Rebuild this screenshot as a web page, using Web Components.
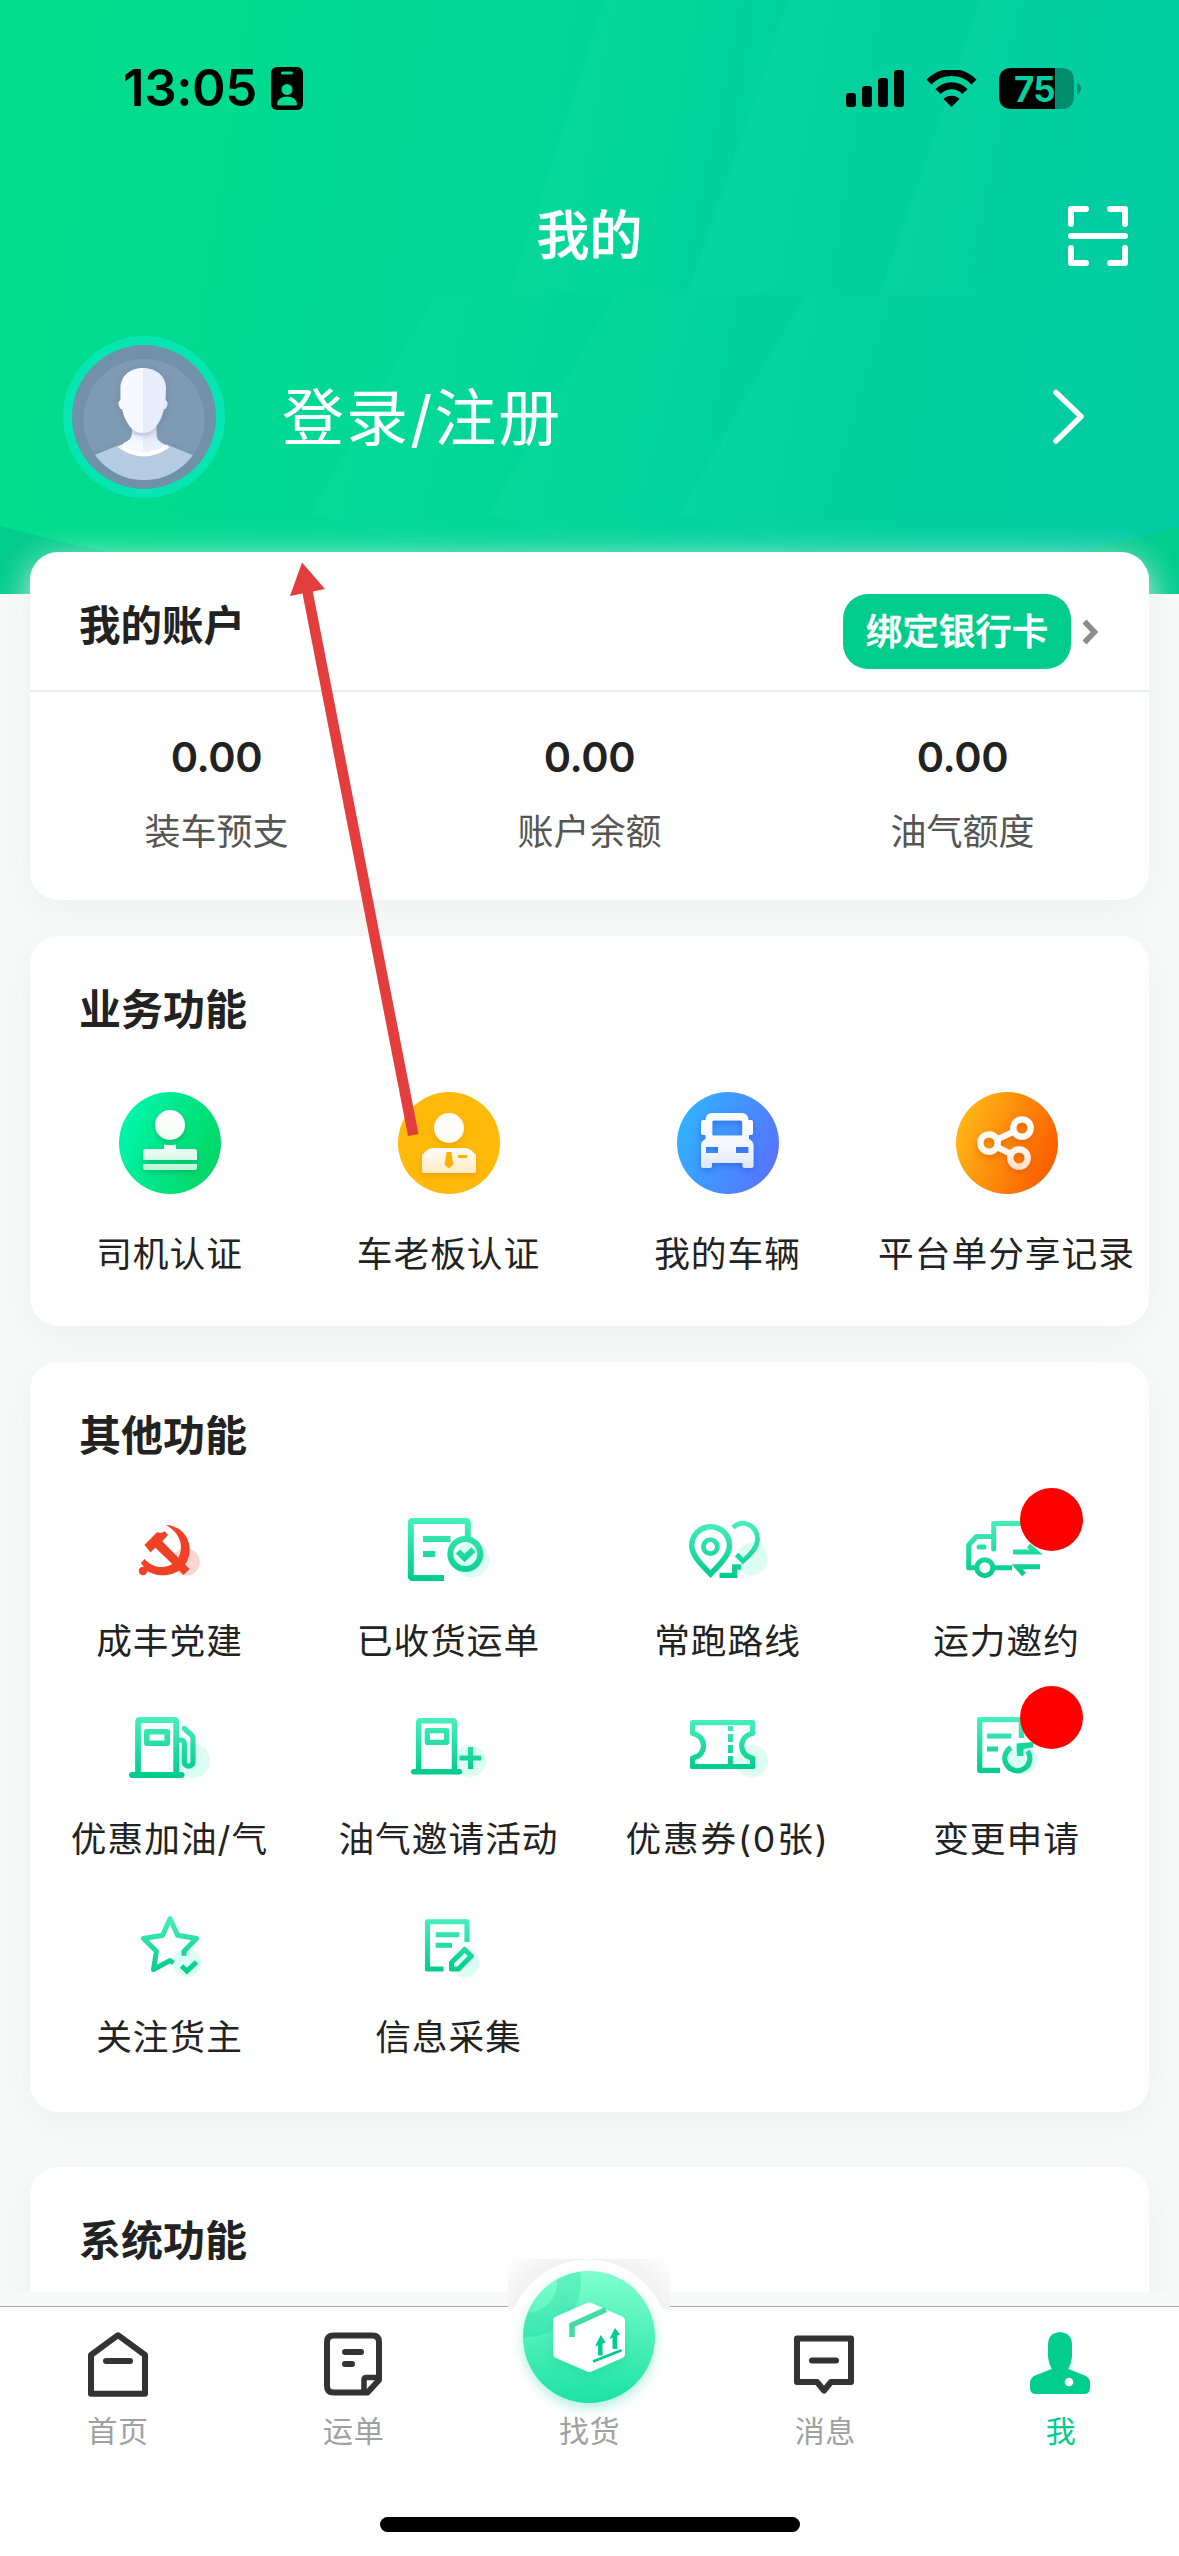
<!DOCTYPE html>
<html lang="zh-CN">
<head>
<meta charset="utf-8">
<title>我的</title>
<style>
html,body{margin:0;padding:0}
body{width:1179px;height:2556px;overflow:hidden;background:#f8faf9;font-family:Inter,"Noto Sans CJK SC",sans-serif;color:#222}
</style>
</head>
<body>
<app-screen>
  <profile-header slot="header" heading="我的" login="登录/注册" time="13:05" battery="75"></profile-header>
  <account-card heading="我的账户" action="绑定银行卡">
    <account-stat value="0.00" label="装车预支"></account-stat>
    <account-stat value="0.00" label="账户余额"></account-stat>
    <account-stat value="0.00" label="油气额度"></account-stat>
  </account-card>
  <menu-card class="biz" heading="业务功能">
    <menu-item icon="stamp">司机认证</menu-item>
    <menu-item icon="owner">车老板认证</menu-item>
    <menu-item icon="car">我的车辆</menu-item>
    <menu-item icon="share">平台单分享记录</menu-item>
  </menu-card>
  <menu-card class="other" heading="其他功能">
    <menu-item icon="party">成丰党建</menu-item>
    <menu-item icon="received">已收货运单</menu-item>
    <menu-item icon="route">常跑路线</menu-item>
    <menu-item icon="truck" dot>运力邀约</menu-item>
    <menu-item icon="gas">优惠加油/气</menu-item>
    <menu-item icon="gasplus">油气邀请活动</menu-item>
    <menu-item icon="coupon" wide>优惠券(0张)</menu-item>
    <menu-item icon="change" dot>变更申请</menu-item>
    <menu-item icon="star">关注货主</menu-item>
    <menu-item icon="collect">信息采集</menu-item>
  </menu-card>
  <menu-card class="sys" heading="系统功能"></menu-card>
  <tab-bar slot="footer">
    <tab-item icon="home">首页</tab-item>
    <tab-item icon="order">运单</tab-item>
    <tab-item icon="find" big>找货</tab-item>
    <tab-item icon="message">消息</tab-item>
    <tab-item icon="me" active>我</tab-item>
  </tab-bar>
  <pointer-arrow slot="overlay"></pointer-arrow>
</app-screen>
<script>
const define = (name, render) => customElements.define(name, class extends HTMLElement {
  constructor(){ super(); this.attachShadow({mode:'open'}); }
  connectedCallback(){ this.shadowRoot.innerHTML = render(this); }
});
const at = (el, n) => el.getAttribute(n) || '';
const FONT = 'Inter,"Noto Sans CJK SC",sans-serif';

/* Icon artwork: [viewBox, markup, gradient top, gradient bottom] */
const line = (w, d, extra='') => `<path d="${d}" fill="none" stroke="url(#g)" stroke-width="${w}" ${extra}/>`;
const halo = (x, y, r, c='#dcfdf2') => `<circle cx="${x}" cy="${y}" r="${r}" fill="${c}"/>`;
const disc = (x, c1, c2) => `<defs><linearGradient id="b" x1="0" y1=".3" x2="1" y2=".7"><stop stop-color="${c1}"/><stop offset="1" stop-color="${c2}"/></linearGradient></defs><circle cx="${x}" cy="1143" r="51" fill="url(#b)"/>`;
const white = (c, sh, y1, y2) => `<defs><linearGradient id="w" gradientUnits="userSpaceOnUse" x1="0" y1="${y1}" x2="0" y2="${y2}"><stop stop-color="#fff"/><stop offset=".65" stop-color="#fff" stop-opacity=".92"/><stop offset="1" stop-color="${c}"/></linearGradient><filter id="s" x="-20%" y="-20%" width="140%" height="150%"><feDropShadow dx="0" dy="3" stdDeviation="3" flood-color="${sh}" flood-opacity=".5"/></filter></defs>`;
const ICONS = {
  stamp:['115 1088 110 110', disc(170,'#00f7ae','#00d563')+white('#b5f2d5','#009a4c',1110,1171)+
    `<g fill="url(#w)" filter="url(#s)"><circle cx="170" cy="1125" r="15"/><path d="M164 1144.6Q170 1146 176 1144.6V1149H194.5Q197 1149 197 1152V1160H143V1152Q143 1149 145.500 1149H164Z"/><path d="M143 1164H197V1167.500Q197 1170 194.500 1170H145.500Q143 1170 143 1167.500Z"/></g>`],
  owner:['394 1088 110 110', disc(449,'#ffb908','#ffb908')+white('#ffeac0','#e08c00',1113,1174)+
    `<g fill="url(#w)" filter="url(#s)"><circle cx="449" cy="1128" r="15"/><path d="M432 1148H466Q471 1149 476 1155V1171Q476 1173 474 1173H424Q422 1173 422 1171V1155Q427 1149 432 1148Z"/></g><path fill="#ffb000" d="M446.700 1152H451.500L453.200 1164.500L449 1168.500L444.500 1164.500ZM458 1155H467V1158H458Z"/>`],
  car:['673 1088 110 110', disc(728,'#30b3ff','#5872ff')+white('#dce6ff','#1f4fd0',1113,1168)+
    `<path fill="url(#w)" filter="url(#s)" fill-rule="evenodd" d="M712 1113H741.500Q748 1113 748.500 1120H751Q753 1120 753 1122V1133Q753 1135 751 1135H749V1139Q753.500 1141 753.500 1146V1165.500Q753.500 1168 751 1168H745Q742.500 1168 742.500 1165.500V1163H712V1165.500Q712 1168 709.500 1168H703.500Q701 1168 701 1165.500V1146Q701 1141 705.500 1139V1135H703Q701 1135 701 1133V1122Q701 1120 703 1120H705.500Q706 1113 712 1113ZM714 1120.500Q712.300 1120.500 712.300 1122V1135.500H742.200V1122Q742.200 1120.500 740.500 1120.500ZM706 1147V1153H718V1147ZM736 1147V1153H748.500V1147Z"/>`],
  share:['952 1088 110 110', disc(1007,'#ffb915','#fb5a00')+white('#ffdcc0','#c94a00',1116,1170)+
    `<g stroke="url(#w)" fill="none" stroke-width="6.300" filter="url(#s)"><circle cx="989" cy="1143" r="8.700"/><circle cx="1022" cy="1128" r="8.700"/><circle cx="1019" cy="1158" r="8.700"/><path d="M997 1139.500L1014 1131.500M997 1147L1011 1154"/></g>`],
  party:['115 1496 110 110', halo(186,1562,13.7,'#fbd5d1')+
    `<g fill="#f04026"><path d="M166 1525C182 1526 190 1538 189.700 1550C189 1566 177 1575.500 163 1575.300C156 1575.300 150 1573 146.500 1570.500L141 1563L144.500 1559C150 1565 156 1567.500 163 1567C174 1566 181 1558 181 1547C181 1538 175 1530 166 1525Z"/><circle cx="143" cy="1571" r="4.200"/><path d="M144.400 1545L157 1532.300L161 1533L164.700 1531.300L168 1535L162.300 1541.300L189.500 1569L183.600 1575L155.400 1547.700L150.600 1552.300Z"/></g>`],
  received:['394 1496 110 110', halo(471.500,1560,17.6)+line(6,'M467.800 1539V1523Q467.800 1521 465.800 1521H412.800Q410.800 1521 410.800 1523V1576Q410.800 1578 412.800 1578H444')+line(6,'M423 1539H450.500M423 1554H435M458 1551.500L464.500 1558L473.500 1549.500')+`<circle cx="465.300" cy="1554" r="15" fill="none" stroke="url(#g)" stroke-width="6"/>`,1518,1581],
  route:['673 1496 110 110', halo(751.800,1559,16)+line(5.5,'M710.600 1574C703 1566 691.700 1556 691.700 1545.500A18.900 18.900 0 0 1 729.500 1545.500C729.500 1556 718 1566 710.600 1574Z')+line(4.8,'M717.400 1546.700A7 7 0 1 1 703.400 1546.700A7 7 0 1 1 717.400 1546.700Z')+line(4.8,'M733 1527.500C738 1523 743 1522.500 747 1524C754 1526 758 1533 757.500 1540C757 1548 749 1556 743 1561L736.500 1554.500')+line(5.3,'M719.500 1575.300H734.700V1567H741'),1521,1578],
  truck:['952 1496 110 110', line(5,'M1025 1523.500H993.700V1549','stroke-linecap="round" stroke-linejoin="round"')+line(5,'M993 1536.500H976.500L968.700 1545V1567.700H976M995 1567.700H1012','stroke-linejoin="round"')+line(5,'M979 1547H984','stroke-linecap="round"')+line(5,'M992.800 1567.700A8 8 0 1 1 976.800 1567.700A8 8 0 1 1 992.800 1567.700Z')+line(5,'M1013 1552H1036L1028.500 1545.500M1040 1566.700H1017L1024 1574.500'),1520,1578],
  gas:['115 1694 110 110', halo(193,1760.700,17)+line(5.8,'M138 1774V1722Q138 1720 140 1720H174.200Q176.200 1720 176.200 1722V1774')+line(6,'M132 1775H181.500','stroke-linecap="round"')+line(5.6,'M146.800 1731.800H167.200V1743.200H146.800Z','stroke-linejoin="round"')+line(5.2,'M179 1740H181Q184.300 1740 184.300 1744V1762A4.350 4.200 0 0 0 193 1762V1738.500Q193 1736.500 191.500 1735L184.300 1728.500','stroke-linecap="round"'),1717,1777],
  gasplus:['394 1694 110 110', halo(470,1761,16)+line(5.4,'M418.600 1771V1722.700Q418.600 1720.700 420.600 1720.700H452.400Q454.400 1720.700 454.400 1722.700V1771')+line(5.4,'M413.700 1771.700H459.500','stroke-linecap="round"')+line(5.2,'M427.300 1730.700H446.500V1742.300H427.300Z','stroke-linejoin="round"')+line(5.2,'M459.500 1758H481M470.500 1747V1769'),1718,1775],
  coupon:['673 1694 110 110', halo(752,1761,16)+line(5.2,'M692.600 1722.600H752.600V1733.500A12 12.300 0 0 0 752.600 1758V1766.500H692.600V1758A12 12.300 0 0 0 692.600 1733.500Z','stroke-linejoin="round"')+line(5,'M730.400 1726V1731M730.400 1734V1742M730.400 1745V1753M730.400 1756V1764'),1720,1769],
  change:['952 1694 110 110', halo(1022.500,1760,14.8)+line(5.3,'M1021.400 1738V1719.700H979.700V1770.300H1000','stroke-linejoin="round"')+line(5,'M987 1736H1011M987 1749H998')+line(5.2,'M1011 1747.500A12.500 12.500 0 1 0 1027.500 1751')+'<path fill="#17d79c" d="M1016.500 1743.500L1033 1742V1747.500L1023.500 1749V1756H1017Z"/>',1717,1774],
  star:['115 1892 110 110', halo(187,1962.700,14.3)+line(5,'M184 1955.700V1951.300L196.500 1938.500L177.500 1935.300L170 1918.500L162.700 1935.300L143.500 1938.500L156.400 1951.300L153.500 1969.500L170 1960.500L173.500 1963','stroke-linejoin="round"')+line(5,'M181.500 1966L187 1971L196.500 1962'),1916,1974],
  collect:['394 1892 110 110', halo(465,1962.700,14.5)+line(5.1,'M467 1942V1921.700H427.500V1969H443.500','stroke-linejoin="round"')+line(5,'M435.700 1934.700H459M435.700 1945.300H452')+line(5,'M451.500 1962.500L464.600 1949.500L471.300 1956L458.500 1969H451.500Z','stroke-linejoin="round"'),1919,1972],
  home:['78 2325 80 80', `<g fill="none" stroke="#333" stroke-width="6" stroke-linejoin="round" stroke-linecap="round"><path d="M91 2355L118 2335.200L145 2355V2393.800H91Z"/><path d="M106 2361H130"/></g>`],
  order:['313 2325 80 80', `<g fill="none" stroke="#333" stroke-width="6" stroke-linejoin="round" stroke-linecap="round"><path d="M378 2380V2342Q378 2335.500 371.500 2335.500H332.500Q326 2335.500 326 2342V2386Q326 2392.500 332.500 2392.500H366.500Z"/><path stroke-width="5.500" d="M378 2377.500H365.500Q363 2377.500 363 2380V2391"/><path d="M344 2352H360M344 2364H351"/></g>`],
  message:['784 2325 80 80', `<g fill="none" stroke="#333" stroke-width="6" stroke-linejoin="round" stroke-linecap="round"><path d="M796 2338.500H850V2382H830L823 2390.500L816 2382H796Z"/><path d="M811 2360.500H835"/></g>`],
  me:['1021 2325 80 80', `<g fill="#00cc8c"><path d="M1060 2332Q1072 2333 1072 2345V2357Q1071 2370 1060 2377Q1049 2370 1048 2357V2345Q1048 2333 1060 2332Z"/><path d="M1054 2368H1066L1085 2375.500Q1090 2378 1090 2383V2388Q1090 2394 1084 2394H1036Q1030 2394 1030 2388V2383Q1030 2378 1035 2375.500Z"/></g><circle cx="1069" cy="2382" r="4.300" fill="#fff"/>`],
  find:['508 2259 162 154', `<defs><radialGradient id="r" gradientUnits="userSpaceOnUse" cx="588" cy="2340" r="115"><stop offset=".68" stop-color="#f0f0f0"/><stop offset="1" stop-color="#fff"/></radialGradient><linearGradient id="f" x2="0" y2="1"><stop stop-color="#80ffd0"/><stop offset="1" stop-color="#1ce2a1"/></linearGradient><clipPath id="c"><circle cx="589" cy="2337" r="66"/></clipPath><filter id="s" x="-40%" y="-40%" width="180%" height="180%"><feDropShadow dx="0" dy="5" stdDeviation="6" flood-color="#00c98c" flood-opacity=".3"/></filter></defs>
    <path d="M508 2259H670V2309H508Z" fill="url(#r)"/><circle cx="588" cy="2340" r="80.500" fill="#fff"/><circle cx="589" cy="2337" r="66" fill="url(#f)" filter="url(#s)"/><circle cx="526" cy="2282" r="43" fill="none" stroke="#00c890" stroke-opacity=".22" stroke-width="24" clip-path="url(#c)"/>
    <path filter="url(#s)" fill="#fff" stroke="#fff" stroke-width="8" stroke-linejoin="round" d="M589.300 2306.500L621 2320.500V2354L589.300 2368L557 2354V2320.500Z"/>
    <path d="M606 2309.500L572 2325V2337" fill="none" stroke="#43dca9" stroke-width="5.500"/>
    <g stroke="#00cc8c" fill="none"><path stroke-width="4.500" d="M600.300 2355.500V2341M614.800 2349V2334"/><path stroke-width="2.800" d="M593 2361.500L621.500 2350.300"/></g><path fill="#00cc8c" d="M600.700 2335L605.500 2342.500L595 2346.500ZM615 2328L620 2334.500L609.500 2339Z"/>`],
};
define('app-icon', el => {
  const [vb, body, y1=0, y2=1] = ICONS[at(el,'name')];
  const [, , w, h] = vb.split(' ');
  return `<style>:host{display:block;flex:none}svg{display:block;overflow:visible}</style>
  <svg width="${w}" height="${h}" viewBox="${vb}"><defs><linearGradient id="g" gradientUnits="userSpaceOnUse" x1="0" y1="${y1}" x2="0" y2="${y2}"><stop stop-color="#47efbd"/><stop offset="1" stop-color="#00cb8a"/></linearGradient></defs>${body}</svg>`;
});

define('app-screen', () => `<style>
:host{display:flex;flex-direction:column;width:1179px;height:2556px;overflow:hidden;position:relative;background:#f8faf9}
main{flex:1;min-height:0;display:flex;flex-direction:column;gap:36px;margin-top:-42px;padding:0 30px;z-index:1}
::slotted([slot=footer]){flex:none;z-index:2}
</style><slot name="header"></slot><main><slot></slot></main><slot name="footer"></slot><slot name="overlay"></slot>`);

define('status-bar', el => `<style>
:host{display:flex;align-items:center;height:56px;padding:60px 98px 0 123px;justify-content:space-between}
div{display:flex;align-items:center}
.l{gap:15px}.r{gap:22px}
b{font:600 51px/56px Inter;color:#000;letter-spacing:-.4px;width:133px;white-space:nowrap}
svg{display:block}
.bat{width:82px;height:41px;display:grid}
.bat>*{grid-area:1/1}
.bat span{font:700 35px/42px Inter;color:#08cfa0;padding-left:15px;letter-spacing:-.8px}
</style>
<div class="l"><b>${at(el,'time')}</b><svg width="32" height="43" viewBox="0 0 32 43"><rect width="32" height="43" rx="6"/><rect x="10" y="4.500" width="12" height="3" rx="1.500" fill="#00da91"/><circle cx="16" cy="22.500" r="5.500" fill="#00da91"/><path d="M6 37Q7 29.500 16 29.500T26 37Q26 38.500 24 38.500H8Q6 38.500 6 37Z" fill="#00da91"/></svg></div>
<div class="r"><svg width="58" height="37"><rect y="23" width="10" height="14" rx="3"/><rect x="16" y="16" width="10" height="21" rx="3"/><rect x="32" y="8" width="10" height="29" rx="3"/><rect x="48" width="10" height="37" rx="3"/></svg>
<svg width="51" height="37" viewBox="0 0 51 37"><path d="M3 12A31.500 31.500 0 0 1 48 12M12 21.500A18.500 18.500 0 0 1 39 21.500" fill="none" stroke="#000" stroke-width="7"/><path d="M25.500 37L17.500 29A11.500 11.500 0 0 1 33.500 29Z"/></svg>
<div class="bat"><svg width="83" height="41"><path d="M56 0H62Q75 0 75 13V28Q75 41 62 41H56Z" opacity=".32"/><path d="M78 14.500Q82 17 82 20.500T78 26.500Z" opacity=".32"/><path d="M13 0H56V41H13Q0 41 0 28V13Q0 0 13 0Z"/></svg><span>${at(el,'battery')}</span></div></div>`);

define('user-avatar', () => `<style>:host{display:block}svg{display:block}</style>
<svg width="162" height="162" viewBox="63 336 162 162"><defs><linearGradient id="h"><stop offset=".49" stop-color="#f8f9fe"/><stop offset=".51" stop-color="#e9edfb"/></linearGradient><linearGradient id="k" x2="0" y2="1"><stop stop-color="#dbe3f5"/><stop offset="1" stop-color="#eff3fc"/></linearGradient><clipPath id="c"><circle cx="144" cy="419.500" r="60.500"/></clipPath><filter id="s" x="-30%" y="-30%" width="160%" height="160%"><feDropShadow dx="0" dy="1" stdDeviation="4" flood-color="#5b7593" flood-opacity=".5"/></filter></defs>
<circle cx="144" cy="417" r="81" fill="#05e6b3"/><circle cx="144" cy="417" r="72" fill="#7191a9"/><circle cx="144" cy="419.500" r="60.500" fill="#7f9bb4"/>
<g clip-path="url(#c)"><path filter="url(#s)" fill="#b4cbe2" d="M80 461L119 445Q143 464 168 445L207 461V490H80Z"/></g>
<path fill="url(#k)" d="M132 424H156.500V433Q156 441 164 444Q168 446 164 448Q144 459 123 448Q120 446 124 443Q132 440 132 433Z"/><path fill="#f6f9fe" d="M132 434L143 437V452Q130 452 123 447Q120 446 124 443Q132 440 132 434Z"/><path d="M119.500 446Q143 463 168 446" fill="none" stroke="#fff" stroke-width="4"/>
<path filter="url(#s)" fill="url(#h)" d="M143 368C157 368 166 377 166 388L165.500 400Q169 402 166.500 407Q165.500 410 164 409C161 421 155 433 143 433S125 421 122 409Q120.500 410 119.500 407Q117 402 120.500 400L120.500 388C120.500 377 129 368 143 368Z"/></svg>`);

define('profile-header', el => `<style>
:host{display:grid;height:594px;flex:none}
.bg,.fg{grid-area:1/1}
.bg{display:block}
.fg{display:flex;flex-direction:column}
.nav{display:grid;grid-template-columns:60px 1fr 60px;align-items:center;height:116px;padding:62px 51px 0;text-align:center}
.nav span{grid-column:2;font:500 53px/60px ${FONT};color:#fff;-webkit-text-stroke:.4px #fff}
.nav svg{display:block}
.login{display:flex;align-items:center;height:162px;padding:42px 95px 0 63px}
.login span{flex:1;margin:4px 0 0 57px;font:400 62px/80px ${FONT};color:#fff;letter-spacing:2px}
</style>
<svg class="bg" width="1179" height="594" viewBox="0 0 1179 594"><defs>
<linearGradient id="m" gradientUnits="userSpaceOnUse" x1="0" y1="120" x2="1179" y2="300"><stop stop-color="#00de8b"/><stop offset=".5" stop-color="#00d598"/><stop offset="1" stop-color="#00cba3"/></linearGradient>
<linearGradient id="t" gradientTransform="rotate(12)" x1="0" x2="1"><stop offset=".15" stop-color="#38e8b0" stop-opacity=".11"/><stop offset=".85" stop-color="#38e8b0" stop-opacity="0"/></linearGradient></defs>
<path fill="#00cc8c" d="M0 0H1179V594H0Z"/><path fill="url(#m)" d="M0 0H1179V526Q1090 552 1020 562H160Q90 550 0 526Z"/>
<g fill="url(#t)"><path d="M605 0H790L690 294H510Z"/><path d="M789 0H980L880 294H688Z"/><path d="M981 0H1179L1060 294H880Z"/>
<path d="M436 294H615L489 540H400L310 514Z"/><path d="M615 294H806L679 540H570L489 514Z"/><path d="M806 294H1040L900 545H800L679 514Z"/></g></svg>
<div class="fg"><status-bar time="${at(el,'time')}" battery="${at(el,'battery')}"></status-bar>
<div class="nav"><span>${at(el,'heading')}</span><svg width="60" height="60" fill="none" stroke="#fff" stroke-width="6" stroke-linecap="round" stroke-linejoin="round"><path d="M3 18V3H18M42 3H57V18M57 42V57H42M18 57H3V42M3 30H57"/></svg></div>
<div class="login"><user-avatar></user-avatar><span>${at(el,'login')}</span><svg width="31" height="56" viewBox="0 0 31 56" fill="none" stroke="#fff" stroke-width="5.500" stroke-linecap="round" stroke-linejoin="round"><path d="M3 3.500L28 27.500L3 52"/></svg></div></div>`);

const CARD = `background:#fff;border-radius:28px;box-shadow:0 10px 36px #eeefef;`;
define('account-card', el => `<style>
:host{display:block;height:348px;flex:none;${CARD}}
header{display:flex;height:140px;border-bottom:2px solid #e9ebeb;padding:0 50px 0 49px;box-sizing:border-box;justify-content:space-between}
h2{margin:44px 0 0;font:700 41.500px/60px ${FONT};color:#222}
.a{display:flex;align-items:center;gap:11px;height:75px;margin-top:42px}
.a span{display:block;width:228px;height:75px;border-radius:25px;background:#00cc8c;color:#fff;text-align:center;font:500 36.500px/76px ${FONT};-webkit-text-stroke:.6px #fff}
.s{display:grid;grid-template-columns:repeat(3,1fr)}
</style><header><h2>${at(el,'heading')}</h2><div class="a"><span>${at(el,'action')}</span><svg width="17" height="26" fill="none" stroke="#8c8c8c" stroke-width="5.500"><path d="M2.500 2.500L12.500 13L2.500 23.500"/></svg></div></header><div class="s"><slot></slot></div>`);
define('account-stat', el => `<style>
:host{display:flex;flex-direction:column;align-items:center;padding-top:40px}
b{font:600 41.500px/50px Inter;color:#222;letter-spacing:-.4px}
span{font:400 36px/50px ${FONT};color:#555;margin-top:25px}
</style><b>${at(el,'value')}</b><span>${at(el,'label')}</span>`);

define('menu-card', el => `<style>
:host{display:block;flex:none;box-sizing:border-box;${CARD}}
:host(.biz){height:390px}
:host(.other){height:750px}
:host(.sys){height:300px;margin-top:19px}
h2{margin:0;padding:44px 49px 0;font:700 42px/60px ${FONT};color:#222}
.g{display:grid;grid-template-columns:repeat(4,279px);grid-auto-rows:198px}
:host(.biz) .g{padding-top:48px}
:host(.other) .g{padding-top:30px}
</style><h2>${at(el,'heading')}</h2><div class="g"><slot></slot></div>`);
define('menu-item', el => `<style>
:host{display:flex;flex-direction:column;align-items:center;position:relative;gap:${/stamp|owner|car|share/.test(at(el,'icon'))?31:10}px}
span{font:400 35.700px/50px ${FONT};color:#222;letter-spacing:${el.hasAttribute('wide')?'1.8px':'1px'};white-space:nowrap}
i{position:absolute;left:153px;top:-8px;width:63px;height:63px;border-radius:50%;background:#f00}
</style><app-icon name="${at(el,'icon')}"></app-icon><span><slot></slot></span>${el.hasAttribute('dot')?'<i></i>':''}`);

define('tab-bar', () => `<style>
:host{display:flex;flex-direction:column;align-items:center;height:264px;background:#fff}
.e{width:100%;height:14px;background:#f8faf9;border-bottom:1px solid #a6a8a8}
.r{display:grid;grid-template-columns:repeat(5,1fr);align-items:end;width:100%;height:142px}
.h{width:420px;height:15px;border-radius:8px;background:#000;margin-top:68px}
</style><div class="e"></div><div class="r"><slot></slot></div><div class="h"></div>`);
define('tab-item', el => `<style>
:host{display:flex;flex-direction:column;align-items:center;justify-content:flex-end;height:142px;gap:${el.hasAttribute('big')?0:8}px}
span{font:400 30px/36px ${FONT};letter-spacing:.6px;color:${el.hasAttribute('active')?'#00cc8c':'#a0a0a0'};position:relative}
</style><app-icon name="${at(el,'icon')}"></app-icon><span><slot></slot></span>`);

define('pointer-arrow', () => `<style>:host{position:absolute;left:285px;top:555px;z-index:3}svg{display:block}</style>
<svg width="140" height="590" viewBox="285 555 140 590" fill="#e43d3d"><path d="M302 562.500L325 589L312.800 591.500L418.500 1134L408 1136L302.500 593.500L290 596Z"/></svg>`);
</script>
</body>
</html>
